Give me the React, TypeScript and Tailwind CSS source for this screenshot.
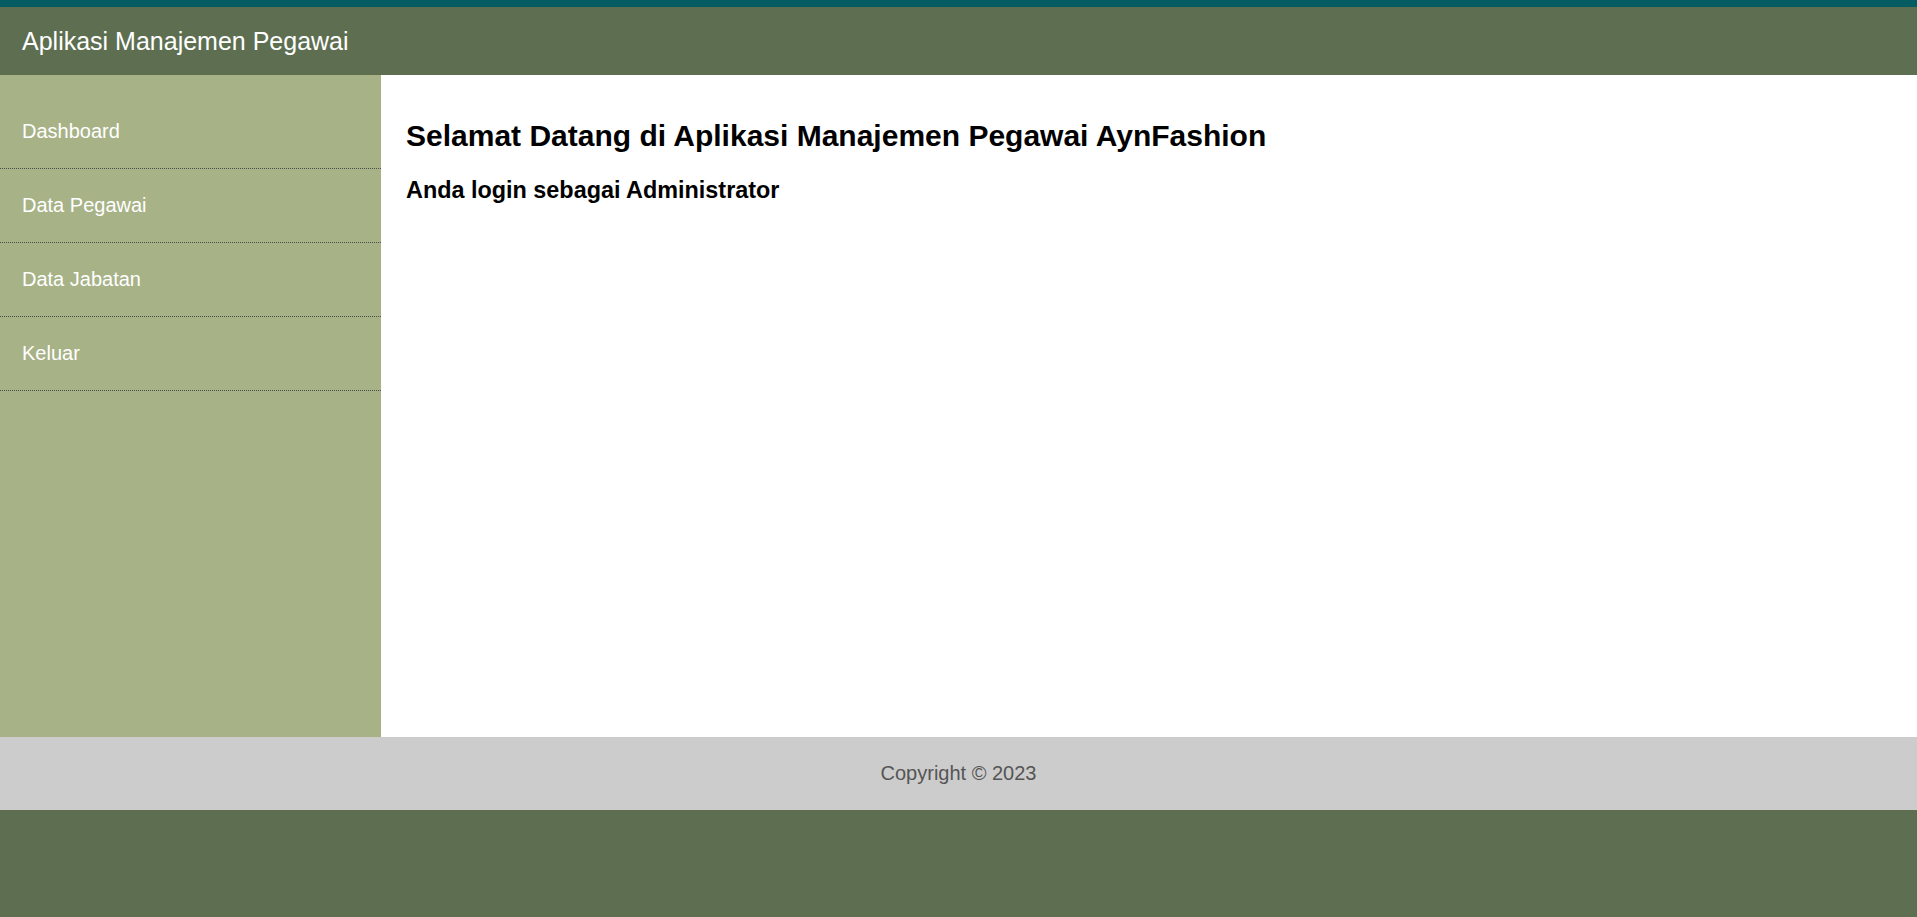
import * as React from "react"

const menu = ["Dashboard", "Data Pegawai", "Data Jabatan", "Keluar"]

export default function App() {
    return (
        <div className="min-h-screen w-full flex flex-col bg-[#5e6e51] font-['Liberation_Sans',Arial,sans-serif]">
            {/* Header with teal top strip */}
            <header className="h-[75px] border-t-[7px] border-[#045b61] bg-[#5e6e51] flex items-center pl-[22px] pt-[1px]">
                <h1 className="text-[25px] leading-[29px] text-white font-normal">Aplikasi Manajemen Pegawai</h1>
            </header>

            <div className="flex h-[662px]">
                {/* Sidebar */}
                <nav className="w-[381px] shrink-0 bg-[#a7b287] pt-[20px]">
                    <ul>
                        {menu.map((item) => (
                            <li key={item} className="border-b border-dotted border-[#4a4a4a]">
                                <a href="#" className="block pl-[22px] pt-[25px] pb-[25px] text-[20px] leading-[23px] text-white">
                                    {item}
                                </a>
                            </li>
                        ))}
                    </ul>
                </nav>

                {/* Content */}
                <main className="flex-1 bg-white pl-[25px] pt-[44px]">
                    <h2 className="text-[30px] leading-[34px] font-bold text-black">
                        Selamat Datang di Aplikasi Manajemen Pegawai AynFashion
                    </h2>
                    <h3 className="mt-[24px] text-[23.4px] leading-[27px] font-bold text-black">
                        Anda login sebagai Administrator
                    </h3>
                </main>
            </div>

            <footer className="h-[73px] bg-[#cccccc] flex items-center justify-center">
                <p className="text-[20px] leading-[23px] text-[#555555]">Copyright © 2023</p>
            </footer>
        </div>
    )
}
